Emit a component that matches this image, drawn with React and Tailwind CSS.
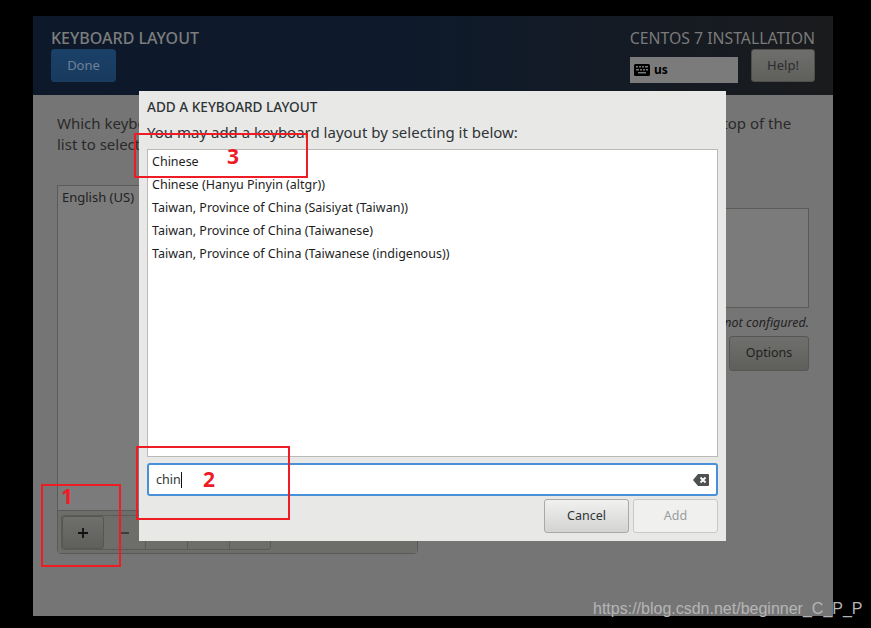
import React from 'react'

const font = { fontFamily: '"Noto Sans", sans-serif' }

const layouts = [
  'Chinese',
  'Chinese (Hanyu Pinyin (altgr))',
  'Taiwan, Province of China (Saisiyat (Taiwan))',
  'Taiwan, Province of China (Taiwanese)',
  'Taiwan, Province of China (Taiwanese (indigenous))',
]

function KeyboardIcon() {
  return (
    <svg width="16" height="12" viewBox="0 0 16 12" className="block">
      <rect x="0" y="0" width="16" height="12" rx="1.5" fill="#000" />
      <g fill="#777">
        <rect x="2" y="2" width="2" height="1.5" />
        <rect x="5" y="2" width="2" height="1.5" />
        <rect x="8" y="2" width="2" height="1.5" />
        <rect x="11" y="2" width="3" height="1.5" />
        <rect x="2" y="5" width="3" height="1.5" />
        <rect x="6" y="5" width="2" height="1.5" />
        <rect x="9" y="5" width="2" height="1.5" />
        <rect x="12" y="5" width="2" height="1.5" />
        <rect x="4" y="8" width="8" height="1.5" />
      </g>
    </svg>
  )
}

function ClearIcon() {
  return (
    <svg width="16" height="12" viewBox="0 0 16 12" className="block">
      <path d="M5 0h10a1 1 0 0 1 1 1v10a1 1 0 0 1-1 1H5L0 6z" fill="#4d5150" />
      <path d="M7.5 3.5l5 5M12.5 3.5l-5 5" stroke="#fff" strokeWidth="1.8" />
    </svg>
  )
}

function RedBox({ className, label, labelClass }) {
  return (
    <div className={`absolute border-2 border-[#ee1c25] ${className}`}>
      <span className={`absolute text-[21px] leading-none font-bold text-[#ee1c25] ${labelClass}`}>{label}</span>
    </div>
  )
}

export default function App() {
  return (
    <div className="relative w-[871px] h-[628px] bg-black overflow-hidden" style={font}>
      <div className="pt-4 pl-[33px]">
        <div className="relative w-[800px] h-[600px] bg-[#757575] flex flex-col">
          {/* top bar */}
          <div className="h-[79px] shrink-0 flex justify-between px-[18px] pt-[13px] bg-gradient-to-r from-[#0d192a] via-[#0e1a2a] to-[#1a1b1d]">
            <div>
              <div className="text-[16px] leading-[19px] font-medium text-[#7d7d7d]">KEYBOARD LAYOUT</div>
              <div className="mt-[1px] w-[65px] h-[33px] rounded-[3px] border border-[#1a3d63] bg-gradient-to-b from-[#1b4169] to-[#183a5e] flex items-center justify-center text-[13px] text-[#6f8299]">
                Done
              </div>
            </div>
            <div className="flex flex-col items-end">
              <div className="text-[15.8px] leading-[19px] text-[#7a7a7a]">CENTOS 7 INSTALLATION</div>
              <div className="mt-[1px] flex items-start gap-[13px]">
                <div className="mt-[8px] w-[108px] h-[26px] bg-[#7b7b7b] flex items-center gap-1 pl-1">
                  <KeyboardIcon />
                  <span className="text-[12px] font-bold text-black">us</span>
                </div>
                <div className="w-[64px] h-[33px] rounded-[3px] border border-[#4e4e4b] bg-gradient-to-b from-[#6f6f6d] to-[#5f5f5c] flex items-center justify-center text-[13px] text-[#2c2c2c]">
                  Help!
                </div>
              </div>
            </div>
          </div>

          {/* page behind the dialog */}
          <div className="flex-1 px-6 pt-[18px] text-[#2a2a2a]">
            <p className="text-[15px] leading-[21px] w-[740px]">
              Which keyboard layouts would you like to use on this system? You may move any layout to the top of the list to select it as the default.
            </p>
            <div className="mt-[30px] flex justify-between">
              <div className="w-[361px] h-[369px] flex flex-col border border-[#5a5a58] rounded-b-[4px]">
                <div className="flex-1 bg-[#7b7b7b] px-1 py-[2px] text-[13px] leading-[18px] text-[#222]">English (US)</div>
                <div className="h-[43px] border-t border-[#5a5a58] bg-[#6d6d6a] px-[3px] pt-1">
                  <div className="flex w-[210px] h-[35px] rounded-[3px] border border-[#5a5a58]">
                    <div className="w-[42px] rounded-[3px] bg-gradient-to-b from-[#6f6f6d] to-[#5f5f5c] border border-[#565654] flex items-center justify-center text-[#111]">
                      <svg width="12" height="12" viewBox="0 0 12 12"><path d="M6 1v10M1 6h10" stroke="currentColor" strokeWidth="1.8" /></svg>
                    </div>
                    <div className="w-[42px] border-r border-[#5a5a58] flex items-center justify-center">
                      <div className="w-[9px] h-[2px] bg-[#3d3d3b]" />
                    </div>
                    <div className="w-[42px] border-r border-[#5a5a58]" />
                    <div className="w-[42px] border-r border-[#5a5a58]" />
                    <div className="flex-1" />
                  </div>
                </div>
              </div>
              <div className="w-[330px] flex flex-col items-end pt-[23px]">
                <div className="w-full h-[100px] bg-[#7b7b7b] border border-[#5a5a58]" />
                <div className="mt-[6px] text-[12.5px] leading-[17px] italic text-[#222]">Layout switching not configured.</div>
                <div className="mt-[5px] w-[80px] h-[35px] rounded-[3px] border border-[#565654] bg-gradient-to-b from-[#6f6f6d] to-[#5f5f5c] flex items-center justify-center text-[12.5px] text-[#1f1f1f]">
                  Options
                </div>
              </div>
            </div>
          </div>

          {/* dialog */}
          <div className="absolute left-[106px] top-[75px] w-[587px] h-[450px] bg-[#e8e8e7] px-2 flex flex-col text-[#2e3436]">
            <div className="pt-[7px] text-[13.6px] leading-[18px] font-medium">ADD A KEYBOARD LAYOUT</div>
            <div className="mt-[6px] text-[15px] leading-[21px]">You may add a keyboard layout by selecting it below:</div>
            <div className="mt-[6px] h-[308px] bg-white border border-[#b9b9b7] pt-[1px] px-1">
              {layouts.map((l) => (
                <div key={l} className="h-[23px] leading-[21px] text-[12.5px] text-[#1e1e1e]">{l}</div>
              ))}
            </div>
            <div className="mt-[6px] h-[33px] bg-white border-2 border-[#4a90d9] rounded-[3px] flex items-center justify-between pl-[7px] pr-[7px]">
              <div className="pt-[1px] text-[12.5px] text-[#2e3436] flex items-center">chin<span className="inline-block w-px h-[16px] bg-[#111]" /></div>
              <ClearIcon />
            </div>
            <div className="mt-[3px] flex justify-end gap-[4px]">
              <div className="w-[85px] h-[34px] rounded-[3px] border border-[#a9a9a7] bg-gradient-to-b from-[#f1f1f0] to-[#d3d3d1] flex items-center justify-center text-[12.5px] text-[#2e3436]">
                Cancel
              </div>
              <div className="w-[85px] h-[34px] rounded-[3px] border border-[#c8c8c6] bg-[#f0f0ef] flex items-center justify-center text-[12.5px] text-[#9a9d9d]">
                Add
              </div>
            </div>
          </div>
        </div>
      </div>

      {/* red annotations */}
      <RedBox className="left-[41px] top-[484px] w-[80px] h-[83px]" label="1" labelClass="left-[18px] top-0" />
      <RedBox className="left-[136px] top-[446px] w-[154px] h-[74px]" label="2" labelClass="left-[65px] top-[21px]" />
      <RedBox className="left-[134px] top-[133px] w-[174px] h-[45px]" label="3" labelClass="left-[91px] top-[11px]" />

      {/* watermark */}
      <div className="absolute left-[593px] top-[599px] text-[16px] leading-[20px] text-[#b5b5b5]" style={{ fontFamily: '"Liberation Sans", sans-serif' }}>
        https://blog.csdn.net/beginner_C_P_P
      </div>
    </div>
  )
}
